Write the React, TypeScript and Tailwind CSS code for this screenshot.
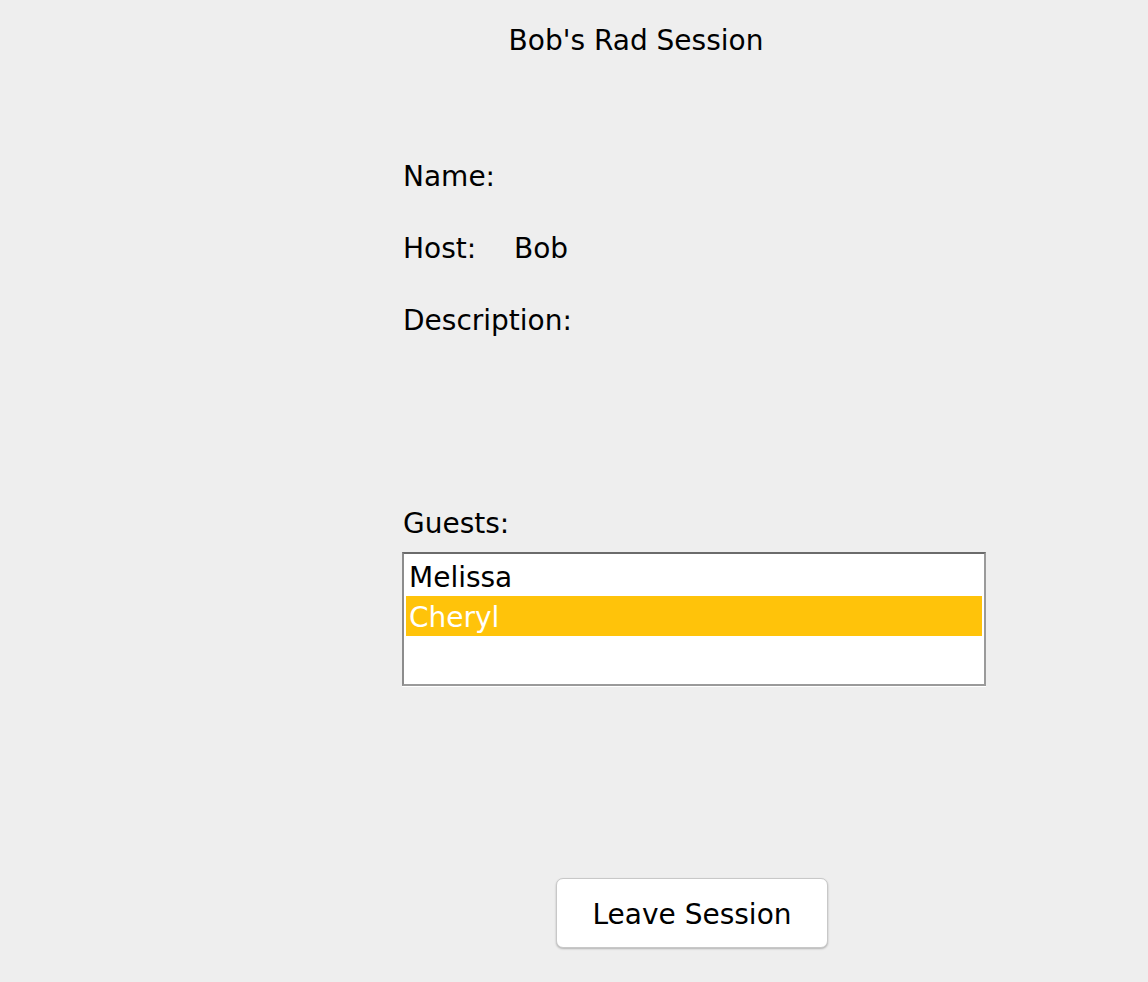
import React from "react";

export default function App() {
  return (
    <div
      className="w-full h-[982px] bg-[#eeeeee] text-black text-[28px] leading-[32px] overflow-hidden"
      style={{ fontFamily: '"DejaVu Sans", Verdana, sans-serif' }}
    >
      <div className="pt-[25px] flex justify-center pl-[124px]">
        <span>Bob's Rad Session</span>
      </div>
      <div className="ml-[403px] w-[584px] flex flex-col">
        <div className="mt-[104px] h-[32px]">Name:</div>
        <div className="mt-[40px] h-[32px] flex">
          <span className="w-[111px]">Host:</span>
          <span>Bob</span>
        </div>
        <div className="mt-[40px] h-[32px]">Description:</div>
        <div className="mt-[171px] h-[32px]">Guests:</div>
        <div className="mt-[12px] -ml-[1px] w-[584px] h-[135px] border-b border-white">
          <div className="h-[134px] bg-white border-2 border-t-[#6b6b6b] border-l-[#8c8c8c] border-r-[#9a9a9a] border-b-[#9a9a9a] p-[2px]">
            <div className="h-[40px] flex items-center pl-[3px] pt-[4px]">Melissa</div>
            <div className="h-[40px] flex items-center pl-[3px] pt-[3px] bg-[#ffc30a] text-white">Cheryl</div>
          </div>
        </div>
      </div>
      <div className="mt-[191px] ml-[556px]">
        <button className="w-[272px] h-[70px] bg-white rounded-[7px] border border-[#c8c8c8] shadow-[0_1px_2px_rgba(0,0,0,0.25)] flex items-center justify-center pt-[4px]">
          Leave Session
        </button>
      </div>
    </div>
  );
}
